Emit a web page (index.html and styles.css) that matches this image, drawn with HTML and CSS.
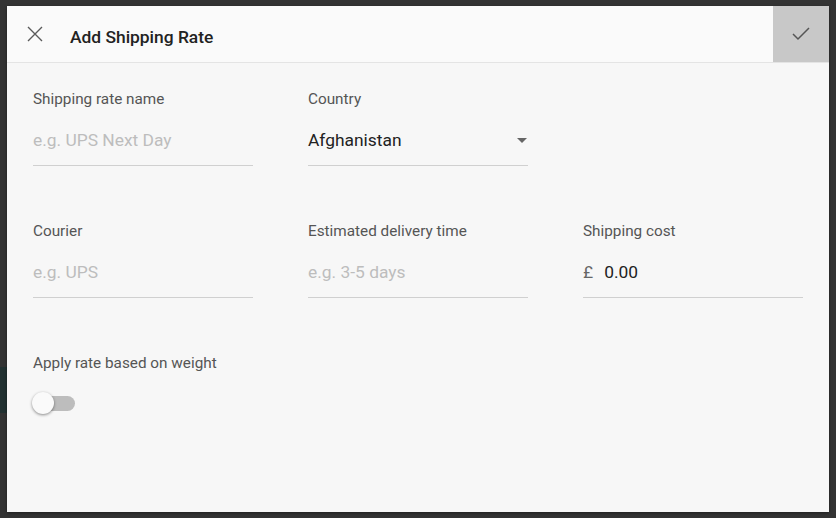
FILE: index.html
```html
<!DOCTYPE html>
<html>
<head>
<meta charset="utf-8">
<link rel="stylesheet" href="styles.css">
</head>
<body>
<div class="backdrop">
  <div class="side-band"></div>
  <div class="dialog">
    <div class="header">
      <button class="close-btn" aria-label="Close">
        <svg width="16" height="16" viewBox="0 0 16 16"><path d="M1 1 L15 15 M15 1 L1 15" stroke="#5a5a5a" stroke-width="1.4" fill="none"/></svg>
      </button>
      <div class="title">Add Shipping Rate</div>
      <button class="save-btn" aria-label="Save">
        <svg width="18" height="14" viewBox="0 0 18 14"><path d="M1 7 L6 12 L17 1" stroke="#555" stroke-width="1.5" fill="none"/></svg>
      </button>
    </div>
    <div class="body">
      <div class="grid">
        <div class="field">
          <div class="label">Shipping rate name</div>
          <div class="input placeholder">e.g. UPS Next Day</div>
        </div>
        <div class="field">
          <div class="label">Country</div>
          <div class="input select"><span>Afghanistan</span><span class="caret"></span></div>
        </div>
        <div class="field"></div>
        <div class="field">
          <div class="label">Courier</div>
          <div class="input placeholder">e.g. UPS</div>
        </div>
        <div class="field">
          <div class="label">Estimated delivery time</div>
          <div class="input placeholder">e.g. 3-5 days</div>
        </div>
        <div class="field">
          <div class="label">Shipping cost</div>
          <div class="input"><span class="currency">£</span><span>0.00</span></div>
        </div>
      </div>
      <div class="weight">
        <div class="label">Apply rate based on weight</div>
        <div class="toggle"><span class="track"></span><span class="thumb"></span></div>
      </div>
    </div>
  </div>
</div>
</body>
</html>
```
FILE: styles.css
```css
* { box-sizing: border-box; }
html, body { margin: 0; padding: 0; }
body {
  background: #333333;
  font-family: Roboto, "Liberation Sans", sans-serif;
  width: 836px;
  height: 518px;
  overflow: hidden;
}
.backdrop {
  position: relative;
  padding: 6px 7px;
  height: 518px;
}
.side-band {
  position: absolute;
  left: 0;
  top: 367px;
  width: 7px;
  height: 46px;
  background: #223131;
}
.dialog {
  position: relative;
  width: 822px;
  height: 506px;
  background: #f7f7f7;
  box-shadow: 0 1px 3px rgba(0,0,0,0.4);
}
.header {
  display: flex;
  align-items: center;
  height: 57px;
  background: #fafafa;
  border-bottom: 1px solid #e4e4e4;
}
.close-btn, .save-btn {
  border: 0;
  padding: 0;
  margin: 0;
  background: transparent;
  display: flex;
  align-items: center;
  justify-content: center;
  width: 56px;
  height: 56px;
}
.close-btn svg { margin-left: -1px; }
.title {
  flex: 1;
  margin-left: 7px;
  font-size: 17.4px;
  font-weight: 500;
  color: #222;
  padding-top: 5px;
}
.save-btn {
  background: #c8c8c8;
  align-self: flex-start;
}
.body {
  padding: 26px 26px 0 26px;
}
.grid {
  display: grid;
  grid-template-columns: 220px 220px 220px;
  column-gap: 55px;
  row-gap: 55px;
}
.field { height: 77px; }
.label {
  font-size: 15.3px;
  line-height: 20px;
  color: #555;
}
.input {
  display: flex;
  align-items: center;
  padding: 19px 0 13px;
  font-size: 17.4px;
  line-height: 24px;
  color: #222;
  border-bottom: 1px solid #d0d0d0;
}
.placeholder { color: #bdbdbd; }
.select { justify-content: space-between; }
.caret {
  width: 0;
  height: 0;
  margin-right: 1px;
  border-left: 5px solid transparent;
  border-right: 5px solid transparent;
  border-top: 5px solid #666;
}
.currency {
  color: #666;
  margin-right: 11px;
}
.weight { padding-top: 55px; }
.toggle {
  position: relative;
  margin-top: 19px;
  width: 42px;
  height: 22px;
}
.track {
  position: absolute;
  left: 7px;
  top: 4px;
  width: 35px;
  height: 15px;
  border-radius: 8px;
  background: #bdbdbd;
}
.thumb {
  position: absolute;
  left: -1px;
  top: 0;
  width: 22px;
  height: 22px;
  border-radius: 50%;
  background: #fafafa;
  box-shadow: 0 1px 3px rgba(0,0,0,0.45);
}
```
